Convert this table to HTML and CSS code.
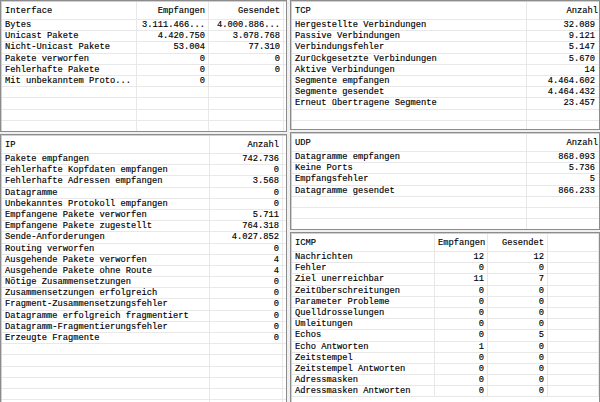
FILE: index.html
```html
<!DOCTYPE html>
<html lang="de">
<head>
<meta charset="utf-8">
<title>Netzwerkstatistik</title>
<link rel="stylesheet" href="styles.css">
</head>
<body>
<div class="screen">
  <div class="col">
    <section class="panel p-iface">
      <div class="row head"><span>Interface</span><span class="num">Empfangen</span><span class="num">Gesendet</span><span></span></div>
      <div class="row"><span>Bytes</span><span class="num">3.111.466...</span><span class="num">4.000.886...</span><span></span></div>
      <div class="row"><span>Unicast Pakete</span><span class="num">4.420.750</span><span class="num">3.078.768</span><span></span></div>
      <div class="row"><span>Nicht-Unicast Pakete</span><span class="num">53.004</span><span class="num">77.310</span><span></span></div>
      <div class="row"><span>Pakete verworfen</span><span class="num">0</span><span class="num">0</span><span></span></div>
      <div class="row"><span>Fehlerhafte Pakete</span><span class="num">0</span><span class="num">0</span><span></span></div>
      <div class="row"><span>Mit unbekanntem Proto...</span><span class="num">0</span><span class="num"></span><span></span></div>
      <div class="row"><span></span><span></span><span></span><span></span></div>
      <div class="row"><span></span><span></span><span></span><span></span></div>
      <div class="row"><span></span><span></span><span></span><span></span></div>
      <div class="row"><span></span><span></span><span></span><span></span></div>
    </section>
    <section class="panel p-ip">
      <div class="row head"><span>IP</span><span class="num">Anzahl</span><span></span></div>
      <div class="row"><span>Pakete empfangen</span><span class="num">742.736</span><span></span></div>
      <div class="row"><span>Fehlerhafte Kopfdaten empfangen</span><span class="num">0</span><span></span></div>
      <div class="row"><span>Fehlerhafte Adressen empfangen</span><span class="num">3.568</span><span></span></div>
      <div class="row"><span>Datagramme</span><span class="num">0</span><span></span></div>
      <div class="row"><span>Unbekanntes Protokoll empfangen</span><span class="num">0</span><span></span></div>
      <div class="row"><span>Empfangene Pakete verworfen</span><span class="num">5.711</span><span></span></div>
      <div class="row"><span>Empfangene Pakete zugestellt</span><span class="num">764.318</span><span></span></div>
      <div class="row"><span>Sende-Anforderungen</span><span class="num">4.027.852</span><span></span></div>
      <div class="row"><span>Routing verworfen</span><span class="num">0</span><span></span></div>
      <div class="row"><span>Ausgehende Pakete verworfen</span><span class="num">4</span><span></span></div>
      <div class="row"><span>Ausgehende Pakete ohne Route</span><span class="num">4</span><span></span></div>
      <div class="row"><span>Nötige Zusammensetzungen</span><span class="num">0</span><span></span></div>
      <div class="row"><span>Zusammensetzungen erfolgreich</span><span class="num">0</span><span></span></div>
      <div class="row"><span>Fragment-Zusammensetzungsfehler</span><span class="num">0</span><span></span></div>
      <div class="row"><span>Datagramme erfolgreich fragmentiert</span><span class="num">0</span><span></span></div>
      <div class="row"><span>Datagramm-Fragmentierungsfehler</span><span class="num">0</span><span></span></div>
      <div class="row"><span>Erzeugte Fragmente</span><span class="num">0</span><span></span></div>
      <div class="row"><span></span><span></span><span></span></div>
      <div class="row"><span></span><span></span><span></span></div>
      <div class="row"><span></span><span></span><span></span></div>
      <div class="row"><span></span><span></span><span></span></div>
      <div class="row"><span></span><span></span><span></span></div>
      <div class="row"><span></span><span></span><span></span></div>
    </section>
  </div>
  <div class="col">
    <section class="panel p-tcp">
      <div class="row head"><span>TCP</span><span class="num">Anzahl</span></div>
      <div class="row"><span>Hergestellte Verbindungen</span><span class="num">32.089</span></div>
      <div class="row"><span>Passive Verbindungen</span><span class="num">9.121</span></div>
      <div class="row"><span>Verbindungsfehler</span><span class="num">5.147</span></div>
      <div class="row"><span>Zurückgesetzte Verbindungen</span><span class="num">5.670</span></div>
      <div class="row"><span>Aktive Verbindungen</span><span class="num">14</span></div>
      <div class="row"><span>Segmente empfangen</span><span class="num">4.464.602</span></div>
      <div class="row"><span>Segmente gesendet</span><span class="num">4.464.432</span></div>
      <div class="row"><span>Erneut übertragene Segmente</span><span class="num">23.457</span></div>
      <div class="row"><span></span><span></span></div>
      <div class="row"><span></span><span></span></div>
    </section>
    <section class="panel p-udp">
      <div class="row head"><span>UDP</span><span class="num">Anzahl</span></div>
      <div class="row"><span>Datagramme empfangen</span><span class="num">868.093</span></div>
      <div class="row"><span>Keine Ports</span><span class="num">5.736</span></div>
      <div class="row"><span>Empfangsfehler</span><span class="num">5</span></div>
      <div class="row"><span>Datagramme gesendet</span><span class="num">866.233</span></div>
      <div class="row"><span></span><span></span></div>
      <div class="row"><span></span><span></span></div>
      <div class="row"><span></span><span></span></div>
      <div class="row"><span></span><span></span></div>
    </section>
    <section class="panel p-icmp">
      <div class="row head"><span>ICMP</span><span class="num">Empfangen</span><span class="num">Gesendet</span><span></span></div>
      <div class="row"><span>Nachrichten</span><span class="num">12</span><span class="num">12</span><span></span></div>
      <div class="row"><span>Fehler</span><span class="num">0</span><span class="num">0</span><span></span></div>
      <div class="row"><span>Ziel unerreichbar</span><span class="num">11</span><span class="num">7</span><span></span></div>
      <div class="row"><span>Zeitüberschreitungen</span><span class="num">0</span><span class="num">0</span><span></span></div>
      <div class="row"><span>Parameter Probleme</span><span class="num">0</span><span class="num">0</span><span></span></div>
      <div class="row"><span>Quelldrosselungen</span><span class="num">0</span><span class="num">0</span><span></span></div>
      <div class="row"><span>Umleitungen</span><span class="num">0</span><span class="num">0</span><span></span></div>
      <div class="row"><span>Echos</span><span class="num">0</span><span class="num">5</span><span></span></div>
      <div class="row"><span>Echo Antworten</span><span class="num">1</span><span class="num">0</span><span></span></div>
      <div class="row"><span>Zeitstempel</span><span class="num">0</span><span class="num">0</span><span></span></div>
      <div class="row"><span>Zeitstempel Antworten</span><span class="num">0</span><span class="num">0</span><span></span></div>
      <div class="row"><span>Adressmasken</span><span class="num">0</span><span class="num">0</span><span></span></div>
      <div class="row"><span>Adressmasken Antworten</span><span class="num">0</span><span class="num">0</span><span></span></div>
    </section>
  </div>
</div>
</body>
</html>
```

FILE: styles.css
```css
* { box-sizing: border-box; margin: 0; padding: 0; }
html, body { width: 600px; height: 402px; overflow: hidden; background: #f0f0f0; }
body {
  font-family: "Liberation Mono", "DejaVu Sans Mono", monospace;
  font-size: 8.75px;
  color: #000;
  -webkit-text-stroke: 0.15px #000;
}
.screen {
  display: grid;
  grid-template-columns: 287px 1fr;
  column-gap: 3px;
  height: 402px;
}
.col { display: flex; flex-direction: column; gap: 2px; min-width: 0; }
.panel {
  background: #fff;
  border: 1px solid #8c8c8c;
  box-shadow: inset 1px 1px 0 #d0d0d0;
  overflow: hidden;
  padding: 1px 0 0 1px;
}
.p-iface { flex: 0 0 132px; }
.p-ip { flex: 1 1 auto; }
.p-tcp { flex: 0 0 130px; }
.p-udp { flex: 0 0 98px; }
.p-icmp { flex: 1 1 auto; }

.row {
  display: grid;
  height: 11.2px;
  border-bottom: 1px solid #e8e8e8;
  align-items: stretch;
}
.row > span {
  padding: 0 3px;
  white-space: nowrap;
  overflow: hidden;
  border-right: 1px solid #e8e8e8;
  line-height: 10.2px;
}
.row.head { height: 18px; }
.row.head > span { line-height: 18px; }
.num { text-align: right; }

.p-iface .row { grid-template-columns: 135px 72px 75px 1fr; }
.p-ip .row { grid-template-columns: 208px 73px 1fr; }
.p-tcp .row, .p-udp .row { grid-template-columns: 235px 1fr; }
.p-tcp .row > span:last-child, .p-udp .row > span:last-child { border-right: 0; padding-right: 4px; }
.p-tcp .head > span:last-child, .p-udp .head > span:last-child { padding-right: 1px; }
.p-icmp .row { grid-template-columns: 143px 53px 60px 1fr; }
```
